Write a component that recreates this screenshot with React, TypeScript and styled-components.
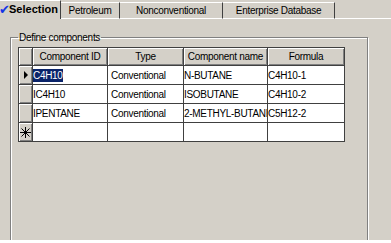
import styled, { createGlobalStyle } from 'styled-components'

const GlobalStyle = createGlobalStyle`
  html, body {
    margin: 0;
    padding: 0;
    background: #ffffff;
  }
  body {
    font-family: "Liberation Sans", Arial, sans-serif;
    font-size: 10px;
    letter-spacing: -0.3px;
    color: #000;
  }
`

interface TabProps {
  $active?: boolean
  $w: number
}

interface CellProps {
  $pad?: number
}

const tabs = [
  { label: 'Selection', width: 61, active: true },
  { label: 'Petroleum', width: 59 },
  { label: 'Nonconventional', width: 103 },
  { label: 'Enterprise Database', width: 112 },
]

const columns = ['Component ID', 'Type', 'Component name', 'Formula']

const rows = [
  { id: 'C4H10', type: 'Conventional', name: 'N-BUTANE', formula: 'C4H10-1', current: true },
  { id: 'IC4H10', type: 'Conventional', name: 'ISOBUTANE', formula: 'C4H10-2' },
  { id: 'IPENTANE', type: 'Conventional', name: '2-METHYL-BUTANE', formula: 'C5H12-2' },
]

// new-row marker of the grid's selector column
const NewRowIcon = () => (
  <svg width="11" height="11" viewBox="0 0 11 11" stroke="#000" strokeWidth="1">
    <line x1="5.5" y1="0" x2="5.5" y2="11" />
    <line x1="0" y1="5.5" x2="11" y2="5.5" />
    <line x1="1.5" y1="1.5" x2="9.5" y2="9.5" />
    <line x1="9.5" y1="1.5" x2="1.5" y2="9.5" />
  </svg>
)

export default function App() {
  return (
    <>
      <GlobalStyle />
      <Window>
        <TabStrip>
          {tabs.map((t) => (
            <Tab key={t.label} $active={t.active} $w={t.width}>
              {t.active && <Check>✔</Check>}
              {t.label}
            </Tab>
          ))}
          <TabFill />
        </TabStrip>
        <Page>
          <GroupBox>
            <Legend>Define components</Legend>
            <Grid>
              <HeadCell />
              {columns.map((c) => (
                <HeadCell key={c}>{c}</HeadCell>
              ))}
              {rows.map((r) => (
                <Row key={r.id}>
                  <Selector>{r.current && <Arrow />}</Selector>
                  <Cell>{r.current ? <Selected>{r.id}</Selected> : r.id}</Cell>
                  <Cell $pad={3}>{r.type}</Cell>
                  <Cell>{r.name}</Cell>
                  <Cell>{r.formula}</Cell>
                </Row>
              ))}
              <Row>
                <Selector>
                  <NewRowIcon />
                </Selector>
                <Cell />
                <Cell />
                <Cell />
                <Cell />
              </Row>
            </Grid>
          </GroupBox>
        </Page>
      </Window>
    </>
  )
}

const Window = styled.div`
  width: 391px;
  height: 240px;
  background: #d4d0c8;
  overflow: hidden;
`

const TabStrip = styled.div`
  display: flex;
  align-items: flex-end;
  height: 19px;
`

const Tab = styled.div<TabProps>`
  box-sizing: border-box;
  width: ${({ $w }) => $w}px;
  height: ${({ $active }) => ($active ? '19px' : '17px')};
  display: flex;
  align-items: center;
  justify-content: ${({ $active }) => ($active ? 'flex-start' : 'center')};
  font-weight: ${({ $active }) => ($active ? 'bold' : 'normal')};
  font-size: ${({ $active }) => ($active ? '11px' : '10px')};
  letter-spacing: ${({ $active }) => ($active ? '0' : '-0.3px')};
  border-top: 1px solid #ffffff;
  border-right: 1px solid #404040;
  border-bottom: ${({ $active }) => ($active ? 'none' : '1px solid #ffffff')};
  padding-bottom: ${({ $active }) => ($active ? '2px' : '0')};
  white-space: nowrap;
`

const TabFill = styled.div`
  flex: 1;
  height: 1px;
  background: #ffffff;
`

const Check = styled.span`
  color: #1434e6;
  font-size: 13px;
  width: 10px;
  margin-left: -1px;
  font-family: "DejaVu Sans", sans-serif;
`

const Page = styled.div`
  padding: 12px 0 0 10px;
`

const GroupBox = styled.fieldset`
  box-sizing: border-box;
  width: 358px;
  height: 240px;
  margin: 0;
  padding: 0 0 0 7px;
  border: 1px solid #808080;
  box-shadow: 1px 1px 0 #ffffff, inset 1px 1px 0 #ffffff;
`

const Legend = styled.legend`
  margin-left: 0;
  padding: 0 1px;
  font-size: 10px;
  line-height: 13px;
`

const Grid = styled.div`
  display: grid;
  grid-template-columns: 14px 75px 76px 84px 77px;
  grid-auto-rows: 19px;
  grid-template-rows: 18px;
  width: max-content;
  margin-top: 3px;
  border-left: 1px solid #404040;
  border-top: 1px solid #404040;
`

const Row = styled.div`
  display: contents;
`

const HeadCell = styled.div`
  box-sizing: border-box;
  display: flex;
  align-items: center;
  justify-content: center;
  background: #d4d0c8;
  border-right: 1px solid #404040;
  border-bottom: 1px solid #404040;
  box-shadow: inset 1px 1px 0 #ffffff, inset -1px -1px 0 #808080;
  white-space: nowrap;
  overflow: hidden;
`

const Selector = styled(HeadCell)`
  justify-content: center;
`

const Cell = styled.div<CellProps>`
  box-sizing: border-box;
  display: flex;
  align-items: center;
  padding-left: ${({ $pad }) => $pad ?? 0}px;
  background: #ffffff;
  border-right: 1px solid #404040;
  border-bottom: 1px solid #404040;
  white-space: nowrap;
  overflow: hidden;
`

const Selected = styled.span`
  background: #0a246a;
  color: #ffffff;
  line-height: 13px;
`

const Arrow = styled.span`
  width: 0;
  height: 0;
  border-top: 4px solid transparent;
  border-bottom: 4px solid transparent;
  border-left: 4px solid #000000;
`
